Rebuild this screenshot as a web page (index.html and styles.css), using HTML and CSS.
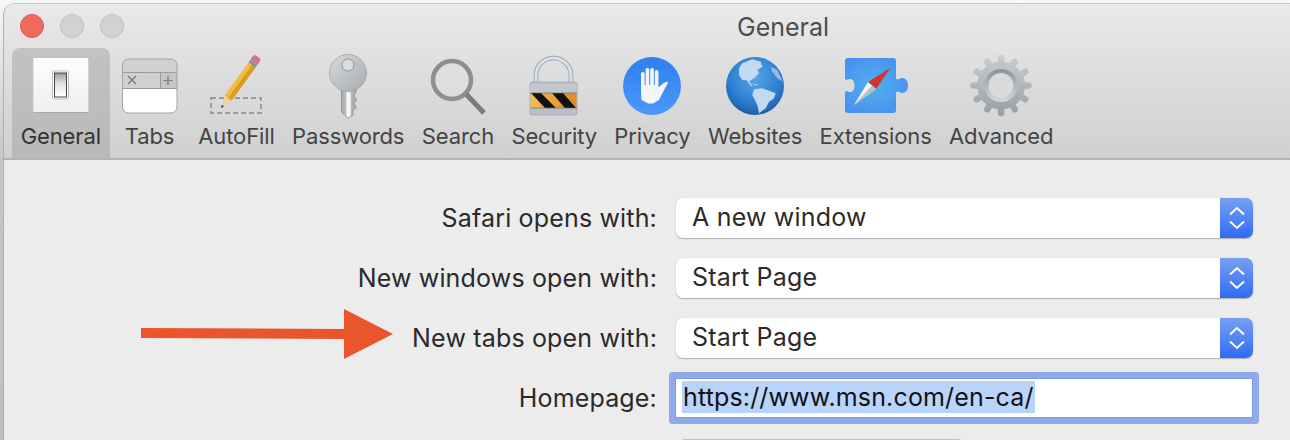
FILE: index.html
```html
<!DOCTYPE html>
<html lang="en">
<head>
<meta charset="utf-8">
<title>General</title>
<link rel="stylesheet" href="styles.css">
</head>
<body>
<div class="window">
  <header class="toolbar">
    <div class="titlebar">
      <div class="lights"><span class="light close"></span><span class="light"></span><span class="light"></span></div>
      <div class="title">General</div>
    </div>
    <nav class="tabs">
      <div class="tab active">
        <svg class="icon" viewBox="0 0 60 60"><defs><linearGradient id="sw" x1="0" y1="0" x2="0" y2="1"><stop offset="0" stop-color="#fdfdfe"/><stop offset="1" stop-color="#eeeff1"/></linearGradient><linearGradient id="rk" x1="0" y1="0" x2="0" y2="1"><stop offset="0" stop-color="#9a9a9a"/><stop offset=".45" stop-color="#e2e2e2"/><stop offset="1" stop-color="#fff"/></linearGradient></defs><rect x="2.300" y="2" width="55" height="55" fill="url(#sw)"/><path d="M2.300 56.500H57.300" stroke="#a9a9a9"/><rect x="21.500" y="15" width="16" height="28" rx="1.500" fill="#fff" stroke="#bdbdbd"/><rect x="23.500" y="17" width="12" height="24" fill="url(#rk)" stroke="#444"/></svg>
        <span>General</span>
      </div>
      <div class="tab">
        <svg class="icon" viewBox="0 0 60 60"><rect x="2.500" y="3" width="54.500" height="54" rx="6" fill="#fff"/><path d="M2.500 32V9a6 6 0 0 1 6-6H51a6 6 0 0 1 6 6v23z" fill="#d2d0d1"/><path d="M40 16.500H57V32H40z" fill="#c6c4c5"/><path d="M2.500 16.500H57M2.500 32.500H57M40.500 16.500V32.500" stroke="#9b9b9b" fill="none"/><path d="M8 20l8 8M16 20l-8 8M43.500 24.500h9M48 20v9" stroke="#777" stroke-width="1.200" fill="none"/><rect x="2.500" y="3" width="54.500" height="54" rx="6" fill="none" stroke="#a3a3a3"/></svg>
        <span>Tabs</span>
      </div>
      <div class="tab">
        <svg class="icon" viewBox="0 0 60 60"><rect x="5" y="42" width="50" height="15" fill="none" stroke="#9c9c9c" stroke-width="2" stroke-dasharray="5 3"/><path d="M18.500 39.800L25.500 44.800 49.500 11.500 42.500 6.500z" fill="#f2bc42"/><path d="M22 42.300L25.500 44.800 49.500 11.500 46 9z" fill="#dc9c22"/><path d="M18.500 39.800L15 52 25.500 44.800z" fill="#eccfa4"/><path d="M15.800 49L15 52 18 50.200z" fill="#222"/><path d="M42.500 6.500L49.500 11.500 51.500 8.700 44.500 3.700z" fill="#7f93a8"/><path d="M44.500 3.700L51.500 8.700 54.500 4.500 54 2.500 49.500-.7 47-.4z" fill="#d76e96"/></svg>
        <span>AutoFill</span>
      </div>
      <div class="tab">
        <svg class="icon" viewBox="0 0 60 60"><defs><linearGradient id="ky" x1="0" y1="0" x2="1" y2="1"><stop offset="0" stop-color="#d7dadc"/><stop offset="1" stop-color="#a6abae"/></linearGradient><linearGradient id="sh" x1="0" y1="0" x2="1" y2="0"><stop offset="0" stop-color="#a5a9ac"/><stop offset=".3" stop-color="#bcc0c2"/><stop offset=".36" stop-color="#fff"/><stop offset=".6" stop-color="#e8e8e8"/><stop offset=".64" stop-color="#b0b4b7"/><stop offset="1" stop-color="#a5a8aa"/></linearGradient></defs><path d="M23.500 28V56L30 62 35 59V54L38.500 52 36 47 39 44 36 40 38 36V28z" fill="url(#sh)" stroke="#8d9194" stroke-width=".8"/><circle cx="30" cy="17" r="18.500" fill="url(#ky)" stroke="#9da1a4" stroke-width=".8"/><circle cx="30" cy="9" r="6" fill="#dcdcdc" stroke="#8f9396"/></svg>
        <span>Passwords</span>
      </div>
      <div class="tab">
        <svg class="icon" viewBox="0 0 60 60"><circle cx="24" cy="24" r="19" fill="#e0e0e0" fill-opacity=".45" stroke="#8e8e8e" stroke-width="4.500"/><path d="M38 38L56 57" stroke="#7c7c7c" stroke-width="5" fill="none"/></svg>
        <span>Search</span>
      </div>
      <div class="tab">
        <svg class="icon" viewBox="0 0 60 60"><defs><linearGradient id="om" x1="0" y1="0" x2="1" y2="0"><stop offset="0" stop-color="#f6bb52"/><stop offset="1" stop-color="#de8a24"/></linearGradient></defs><path d="M12 28V19.500a17.500 17.500 0 0 1 35 0V28" fill="none" stroke="#8e97a2" stroke-width="4.500"/><path d="M12 28V19.500a17.500 17.500 0 0 1 35 0V28" fill="none" stroke="#dbe1e8" stroke-width="3"/><rect x="6" y="26" width="47" height="33" rx="2" fill="#b9bfc7" stroke="#9ea6b0" stroke-width=".8"/><rect x="6.500" y="28" width="46" height="9" fill="#c3c8ce"/><rect x="6.500" y="37" width="46" height="15" fill="url(#om)"/><path d="M7 37H17L32 52H21zM28 37H39L52 52H41z" fill="#111"/><path d="M6 37h47M6 52h47" stroke="#6a6a6a" stroke-width=".7"/></svg>
        <span>Security</span>
      </div>
      <div class="tab">
        <svg class="icon" viewBox="0 0 60 60"><defs><linearGradient id="pv" x1="0" y1="0" x2="0" y2="1"><stop offset="0" stop-color="#2f80ee"/><stop offset="1" stop-color="#4a98fb"/></linearGradient></defs><circle cx="30" cy="30" r="29" fill="url(#pv)"/><path d="M19 17.800a1.800 1.800 0 0 1 3.600 0V29h1V13.800a1.800 1.800 0 0 1 3.600 0V29h1V13.800a1.800 1.800 0 0 1 3.600 0V29h1V15.800a1.800 1.800 0 0 1 3.600 0V31.500L41 27.500 45 25.500 46 27 41 36 37 44 31 47.500H26L19.500 44 19 36z" fill="#f4f5f7"/></svg>
        <span>Privacy</span>
      </div>
      <div class="tab">
        <svg class="icon" viewBox="0 0 60 60"><defs><radialGradient id="gb" cx=".5" cy=".35" r=".75"><stop offset="0" stop-color="#58a6e6"/><stop offset=".6" stop-color="#2b7ed0"/><stop offset="1" stop-color="#174f96"/></radialGradient><clipPath id="gc"><circle cx="30" cy="30" r="29"/></clipPath></defs><circle cx="30" cy="30" r="29" fill="url(#gb)"/><g clip-path="url(#gc)" fill="#c2d9f0"><path d="M14 12.300L17.300 7.300 27.300 3.300 35.700 5.700 37.300 10.700 32.300 14 34 17.300 29 22.300 24 25.700 20.700 24 17.300 24 14 19z"/><path d="M22 25L25 26 28 31 26 30z"/><path d="M27 27.500L34 29 30 29.500z"/><path d="M29 33.300L37.300 32.300 50.700 37.300 49 42.300 44 45.700 40.700 52.300 34 57.300 32.300 49 27.300 39z"/><path d="M45.700 10.700L52.300 14 58 25.700 52.300 22.300 47.300 15.700z" opacity=".65"/></g></svg>
        <span>Websites</span>
      </div>
      <div class="tab">
        <svg class="icon ext" viewBox="0 0 64 60"><defs><radialGradient id="ex" cx=".45" cy=".5" r=".6"><stop offset="0" stop-color="#4fb2ea"/><stop offset="1" stop-color="#4a8ff2"/></radialGradient></defs><path d="M4 2H49a3 3 0 0 1 3 3V22c0 1.500 1.500 1.500 3 1 3-2 9-1 9 6.500s-6 8.500-9 6.500c-1.500-.5-3-.5-3 1V54a3 3 0 0 1-3 3H4a3 3 0 0 1-3-3V37c0-2 2-2 3-1.500 3 1.500 6.500 0 6.500-6s-3.500-7.500-6.500-6C3 24 1 24 1 22V5a3 3 0 0 1 3-3z" fill="url(#ex)"/><path d="M46.700 11.700L24 26 32 33z" fill="#d0362d"/><path d="M24 26L10 49 32 33z" fill="#f4f5f6"/><path d="M32 33L10 49 28 29.500z" fill="#b9bec4"/></svg>
        <span>Extensions</span>
      </div>
      <div class="tab">
        <svg class="icon" viewBox="0 0 60 60"><defs><linearGradient id="gr" gradientUnits="userSpaceOnUse" x1="0" y1="-2" x2="0" y2="61"><stop offset="0" stop-color="#c9ced2"/><stop offset="1" stop-color="#989ea3"/></linearGradient><linearGradient id="gi" x1="0" y1="0" x2="0" y2="1"><stop offset="0" stop-color="#8c9297"/><stop offset="1" stop-color="#d6d9dc"/></linearGradient></defs><path d="M30 2V57M16.250 5.700L43.750 53.300M5.700 15.750L54.300 43.250M2.500 29.500H57.500M5.700 43.250L54.300 15.750M16.250 53.300L43.750 5.700" stroke="url(#gr)" stroke-width="6.500" stroke-linecap="round" fill="none"/><circle cx="30" cy="29.500" r="24" fill="url(#gr)"/><circle cx="30" cy="29.500" r="16.500" fill="url(#gi)"/><circle cx="30" cy="29.500" r="12.500" fill="#dadada"/></svg>
        <span>Advanced</span>
      </div>
    </nav>
  </header>
  <main class="content">
    <div class="overlay-arrow"><svg viewBox="0 0 252 50" width="252" height="50"><path d="M0 19L203 20V0L252 25 203 50V30L0 29z" fill="#ea552c"/></svg></div>
    <div class="form">
      <label class="label">Safari opens with:</label>
      <div class="select"><span>A new window</span><i class="stepper"><svg viewBox="0 0 16 24" width="16" height="24"><path d="M1 8.500L8 2l7 6.500M1 15.500L8 22l7-6.500" fill="none" stroke="#fff" stroke-width="2"/></svg></i></div>
      <label class="label">New windows open with:</label>
      <div class="select"><span>Start Page</span><i class="stepper"><svg viewBox="0 0 16 24" width="16" height="24"><path d="M1 8.500L8 2l7 6.500M1 15.500L8 22l7-6.500" fill="none" stroke="#fff" stroke-width="2"/></svg></i></div>
      <label class="label">New tabs open with:</label>
      <div class="select"><span>Start Page</span><i class="stepper"><svg viewBox="0 0 16 24" width="16" height="24"><path d="M1 8.500L8 2l7 6.500M1 15.500L8 22l7-6.500" fill="none" stroke="#fff" stroke-width="2"/></svg></i></div>
      <label class="label">Homepage:</label>
      <div class="input"><span class="selected">https://www.msn.com/en-ca/</span></div>
      <div></div>
      <div class="button"></div>
    </div>
  </main>
</div>
</body>
</html>
```
FILE: styles.css
```css
* { box-sizing: border-box; }
html, body { margin: 0; height: 100%; overflow: hidden; }
body { padding: 3px 0 0 3px; background: linear-gradient(#f7f7f7, #c6c6c6 160px, #bfbfbf); font-family: Inter, "Liberation Sans", sans-serif; color: #2b2b2b; }
.window { height: 437px; border-radius: 12px 0 0 0; border-style: solid; border-width: 1px 0 0 1px; border-color: #c6c6c6 #b0b0b0; background: #ececec; overflow: hidden; display: flex; flex-direction: column; }
.toolbar { height: 156px; flex: none; background: linear-gradient(#e9e9e9, #d0d0d0); border-bottom: 2px solid #b4b4b4; display: flex; flex-direction: column; }
.titlebar { height: 44px; flex: none; display: flex; align-items: center; position: relative; }
.lights { display: flex; gap: 16px; padding-left: 16px; }
.light { width: 24px; height: 24px; border-radius: 50%; background: #d2d2d2; border: 1px solid #bdbdbd; }
.light.close { background: #ee6a5f; border-color: #dc5a50; }
.title { position: absolute; left: 733px; top: 8px; font-size: 25px; line-height: 30px; color: #4d4d4d; }
.tabs { display: flex; padding-left: 8px; flex: 1; }
.tab { display: flex; flex-direction: column; align-items: center; min-width: 80px; padding: 8px 8.7px 0; font-size: 22px; line-height: 28px; letter-spacing: -0.12px; color: #444; }
.tab.active { background: linear-gradient(#c2c2c2, #b9b9b9); border-radius: 8px 8px 0 0; color: #333; }
.icon { width: 60px; height: 60px; flex: none; margin-bottom: 6px; overflow: visible; }
.icon.ext { width: 64px; }
.content { flex: 1; position: relative; }
.overlay-arrow { position: absolute; left: 137px; top: 149px; line-height: 0; }
.form { display: grid; grid-template-columns: 653px 577px; column-gap: 19px; row-gap: 20px; padding-top: 38px; align-items: center; }
.label { text-align: right; font-size: 25px; letter-spacing: 0.17px; line-height: 40px; color: #2a2a2a; }
.select { height: 40px; background: #fff; border-radius: 7px; box-shadow: 0 1px 1px #aeaeae, 0 0 1px #bbb; display: flex; justify-content: space-between; align-items: center; padding-left: 16px; font-size: 25px; letter-spacing: 0.2px; overflow: hidden; }
.select span { margin-top: -2px; }
.stepper { width: 33px; height: 40px; background: linear-gradient(#77a0f4, #2f6bf5); display: flex; align-items: center; justify-content: center; }
.input { height: 38px; margin: 0 1px 0 0; background: #fff; border-radius: 1px; box-shadow: 0 0 0 1px #7f9ade, 0 0 0 7px #8eaaea; padding: 2px 0 0 6px; font-size: 25px; letter-spacing: 0.15px; line-height: 32px; color: #111; }
.selected { background: #b8d4fb; display: inline-block; padding: 0 1px; }
.button { width: 287px; height: 40px; background: #f4f4f4; border-radius: 7px; box-shadow: 0 -1px 0 #bdbdbd; margin: 2px 0 0 2px; }
```
